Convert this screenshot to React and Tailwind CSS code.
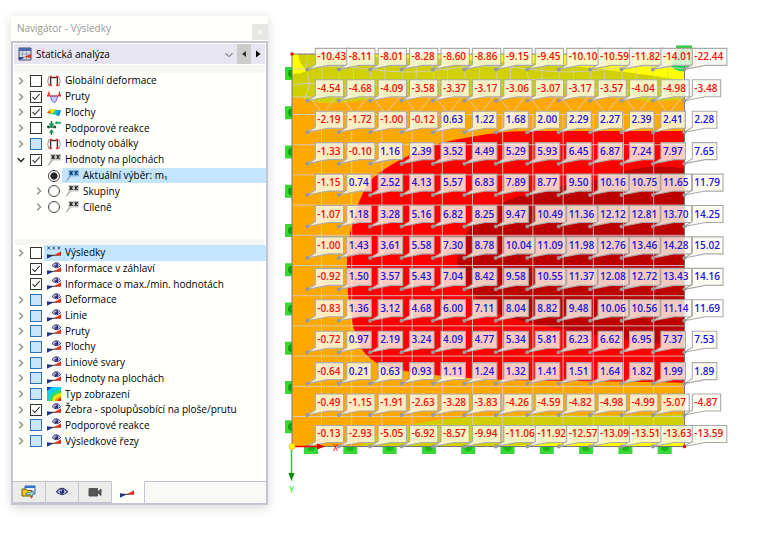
import React, { useState } from "react";
import clsx from "clsx";

const resultItems = [
  { label: "Globální deformace", icon: "frame", state: "off" },
  { label: "Pruty", icon: "member", state: "on" },
  { label: "Plochy", icon: "surface", state: "on" },
  { label: "Podporové reakce", icon: "support", state: "off" },
  { label: "Hodnoty obálky", icon: "frame", state: "mixed" },
  { label: "Hodnoty na plochách", icon: "values", state: "on", open: true },
];

const choices = [
  { label: "Aktuální výběr: m₁", leaf: true },
  { label: "Skupiny" },
  { label: "Cíleně" },
];

const displayItems = [
  { label: "Výsledky", icon: "numbers", state: "off", selected: true },
  { label: "Informace v záhlaví", icon: "eye", state: "on", leaf: true },
  { label: "Informace o max./min. hodnotách", icon: "eye", state: "on", leaf: true },
  { label: "Deformace", icon: "eye", state: "mixed" },
  { label: "Linie", icon: "eye", state: "mixed" },
  { label: "Pruty", icon: "eye", state: "mixed" },
  { label: "Plochy", icon: "eye", state: "mixed" },
  { label: "Liniové svary", icon: "eye", state: "mixed" },
  { label: "Hodnoty na plochách", icon: "eye", state: "mixed" },
  { label: "Typ zobrazení", icon: "contour", state: "mixed" },
  { label: "Žebra - spolupůsobící na ploše/prutu", icon: "eye", state: "on" },
  { label: "Podporové reakce", icon: "eye", state: "mixed" },
  { label: "Výsledkové řezy", icon: "eye", state: "mixed" },
];

const values = [
  "-10.43 -8.11 -8.01 -8.28 -8.60 -8.86 -9.15 -9.45 -10.10 -10.59 -11.82 -14.01 -22.44",
  "-4.54 -4.68 -4.09 -3.58 -3.37 -3.17 -3.06 -3.07 -3.17 -3.57 -4.04 -4.98 -3.48",
  "-2.19 -1.72 -1.00 -0.12 0.63 1.22 1.68 2.00 2.29 2.27 2.39 2.41 2.28",
  "-1.33 -0.10 1.16 2.39 3.52 4.49 5.29 5.93 6.45 6.87 7.24 7.97 7.65",
  "-1.15 0.74 2.52 4.13 5.57 6.83 7.89 8.77 9.50 10.16 10.75 11.65 11.79",
  "-1.07 1.18 3.28 5.16 6.82 8.25 9.47 10.49 11.36 12.12 12.81 13.70 14.25",
  "-1.00 1.43 3.61 5.58 7.30 8.78 10.04 11.09 11.98 12.76 13.46 14.28 15.02",
  "-0.92 1.50 3.57 5.43 7.04 8.42 9.58 10.55 11.37 12.08 12.72 13.43 14.16",
  "-0.83 1.36 3.12 4.68 6.00 7.11 8.04 8.82 9.48 10.06 10.56 11.14 11.69",
  "-0.72 0.97 2.19 3.24 4.09 4.77 5.34 5.81 6.23 6.62 6.95 7.37 7.53",
  "-0.64 0.21 0.63 0.93 1.11 1.24 1.32 1.41 1.51 1.64 1.82 1.99 1.89",
  "-0.49 -1.15 -1.91 -2.63 -3.28 -3.83 -4.26 -4.59 -4.82 -4.98 -4.99 -5.07 -4.87",
  "-0.13 -2.93 -5.05 -6.92 -8.57 -9.94 -11.06 -11.92 -12.57 -13.09 -13.51 -13.63 -13.59",
].map((row) => row.split(" "));

function Chevron({ open }) {
  return (
    <svg viewBox="0 0 8 8" className="h-2 w-2 shrink-0" fill="none">
      {open ? (
        <path d="M0.7 2.2 4 5.6 7.3 2.2" stroke="#222" strokeWidth="1.4" />
      ) : (
        <path d="M2.2 0.8 5.6 4 2.2 7.2" stroke="#8b8b8b" strokeWidth="1.3" />
      )}
    </svg>
  );
}

function Wedges() {
  return (
    <>
      <path d="M0 8.3 7 9.3 0 12.8Z" fill="#1c36b8" />
      <path d="M0 9.8 14 8.8" stroke="#333" strokeWidth="1.1" />
      <path d="M7 9.3 14 5.2v4.5Z" fill="#e5301c" />
    </>
  );
}

function Eye({ x = 0, y = 0, s = 1 }) {
  return (
    <g transform={`translate(${x} ${y}) scale(${s})`}>
      <path d="M0 4Q5-2.5 10 4 5 9 0 4Z" fill="#dcdcf6" stroke="#33336e" strokeWidth="1.1" />
      <circle cx="5" cy="3.7" r="2.2" fill="#26267a" />
      <circle cx="4.3" cy="3" r="0.7" fill="#fff" />
    </g>
  );
}

function Icon({ name, selected }) {
  return (
    <svg viewBox="0 0 14 14" className="h-3.5 w-3.5 shrink-0" fill="none">
      {name === "frame" && (
        <>
          <path d="M3.6 12V3.5h6.8V12" stroke="#333" strokeWidth="1.4" />
          <path d="M2 2.5Q-0.6 7 2 12M12 2.5q2.6 4.5 0 9.5" stroke="#a08f8f" strokeWidth="1" />
          <path d="M2.6 2.8h2.4M9 2.8h2.4M2.4 11.3h2.4M9.2 11.3h2.4" stroke="#e03a28" strokeWidth="1.9" />
        </>
      )}
      {name === "member" && (
        <>
          <path d="M0 6 2 0.5 3.3 6ZM10.8 6 12.5 0.5 14 6Z" fill="#ef3b28" />
          <path d="M3.3 6h7.4Q9.5 12.5 7 12.5 4.5 12 3.3 6Z" fill="#c8c8ff" stroke="#6868e8" />
          <path d="M0 6h14" stroke="#d33" strokeWidth="1" />
        </>
      )}
      {name === "surface" && (
        <>
          <path d="M0 8 3.5 4 14 5.5 12 11 7 9.5Z" fill="#23d45f" />
          <path d="M1 7 4 4l5 .8L5 8.8Z" fill="#f4e300" />
          <path d="M0 8 2.5 5.2 4 8.6Z" fill="#f14b12" />
          <path d="M9 4.8 14 5.5 12 11 9 10Z" fill="#1687ee" />
          <path d="M7.5 6 11 5.2 9.5 9.8 7 9Z" fill="#17ccb7" />
        </>
      )}
      {name === "support" && (
        <>
          <path d="M4.5 0v4M1.2 6h7M4.5 9v5" stroke="#176f45" strokeWidth="1.6" />
          <path d="M1.5 2.6h6L4.5 6.4ZM7.6 1.8 10.2 0v3.6ZM1.8 11.6l2.7-3.2 2.7 3.2Z" fill="#199355" />
          <path d="M10 1.8h4" stroke="#22b66b" strokeWidth="2" />
          <circle cx="1.4" cy="6" r="1.4" fill="#155c3a" />
          <circle cx="7.8" cy="6" r="1.4" fill="#155c3a" />
        </>
      )}
      {name === "values" && (
        <>
          <path d="M3.5 1H14v6.5H6L1 12.5 3.5 7Z" fill={selected ? "#7fb9e6" : "#cacaca"} />
          <path d="M1 12.5 5 7.5" stroke="#999" />
          <path
            d="m4.7 2.2 2.8 3.6m0-3.6L4.7 5.8m5.1-3.6 2.8 3.6m0-3.6L9.8 5.8"
            stroke={selected ? "#0b3c70" : "#222"}
            strokeWidth="1.3"
          />
        </>
      )}
      {name === "numbers" && (
        <>
          <path
            d="m.5.5 2.4 3m0-3-2.4 3M5.5.5l2.4 3m0-3-2.4 3m5.1-3 2.4 3m0-3-2.4 3"
            stroke="#173f68"
            strokeWidth="0.9"
          />
          <Wedges />
        </>
      )}
      {name === "eye" && (
        <>
          <Wedges />
          <Eye x={5} y={0} s={0.88} />
        </>
      )}
      {name === "contour" && (
        <>
          <path d="M0 0h14v14H0Z" fill="#12cdf1" />
          <path d="M0 0h5L0 4Z" fill="#1637d8" />
          <path d="M2 14Q3 4 14 3v11Z" fill="#32dd5a" />
          <path d="M5 14Q6 7 14 6v8Z" fill="#ece712" />
          <path d="M8 14q0-4 6-5v5Z" fill="#ff9d12" />
          <path d="M10.5 14q0-2 3.5-3v3Z" fill="#ee2211" />
        </>
      )}
    </svg>
  );
}

function CheckBox({ state }) {
  const [checked, setChecked] = useState(state === "on");
  return (
    <span className="relative h-3 w-3 shrink-0">
      <input
        type="checkbox"
        checked={checked}
        onChange={(e) => setChecked(e.target.checked)}
        className={clsx(
          "block h-3 w-3 appearance-none border",
          state === "mixed" ? "border-[#2d72b4] bg-[#c9e4fb]" : "border-[#333333] bg-white"
        )}
      />
      {checked && (
        <svg viewBox="0 0 12 12" className="pointer-events-none absolute inset-0" fill="none">
          <path d="M2.5 6 4.8 8.5 9.7 3" stroke="#222" strokeWidth="1.1" />
        </svg>
      )}
    </span>
  );
}

function TreeRow({ item }) {
  return (
    <li className="flex items-center gap-[5px] pl-1">
      <span className="w-2 shrink-0">{!item.leaf && <Chevron open={item.open} />}</span>
      <label className="flex h-full min-w-0 flex-1 items-center gap-0.5">
        <CheckBox state={item.state} />
        <span
          className={clsx(
            "flex h-full min-w-0 flex-1 items-center gap-1 whitespace-nowrap pl-[3px]",
            item.selected && "bg-[#c5e5ff]"
          )}
        >
          <Icon name={item.icon} />
          {item.label}
        </span>
      </label>
    </li>
  );
}

function ChoiceRow({ item, active, onPick }) {
  return (
    <li className="flex items-center gap-[5px] pl-[22px]">
      <span className="w-2 shrink-0">{!item.leaf && <Chevron />}</span>
      <label className="flex h-full flex-1 items-center gap-0.5">
        <input
          type="radio"
          name="choice"
          checked={active}
          onChange={onPick}
          className="h-3 w-3 shrink-0 appearance-none rounded-full border border-[#444444] bg-white checked:bg-[radial-gradient(#222_0_3px,#fff_4px)]"
        />
        <span
          className={clsx(
            "flex h-full flex-1 items-center gap-1 whitespace-nowrap pl-[3px]",
            active && "bg-[#c5e5ff]"
          )}
        >
          <Icon name="values" selected={active} />
          {item.label}
        </span>
      </label>
    </li>
  );
}

function Navigator() {
  const [choice, setChoice] = useState(0);
  const [tab, setTab] = useState(3);

  return (
    <aside className="ml-[11px] mt-[15px] w-[257px] shrink-0 border-t border-[#f5f5f0] bg-[#fffffb] shadow-[0_3px_10px_rgba(0,0,0,0.15)]">
      <header className="flex h-[25px] items-center justify-between pl-1.5">
        <h1 className="text-[#999999]">Navigátor - Výsledky</h1>
        <button
          type="button"
          aria-label="Zavřít"
          className="mt-1.5 h-4 w-4 bg-[#e6e6e4] text-center text-[8px] leading-4 text-white"
        >
          ✕
        </button>
      </header>

      <div className="border-2 border-[#c4c4d2]">
        <div className="m-px flex h-5 items-center bg-[#e8e5f2]">
          <svg viewBox="0 0 14 14" className="ml-1 h-3.5 w-3.5 shrink-0">
            <path d="M1 1h12v12H1Z" fill="#d7dcea" stroke="#44506a" />
            <path d="M1 1h12v3H1Z" fill="#4c68a8" />
            <path d="M4.5 4v8M8.5 4v8M1 7h12" stroke="#8a96b0" strokeWidth=".8" />
            <path d="m6 10 7-3v4Z" fill="#e03318" />
            <path d="m1 10 6 .6L1 13Z" fill="#1c3393" />
          </svg>
          <div className="relative flex-1">
            <select aria-label="Typ analýzy" className="w-full appearance-none pl-1 text-black">
              <option>Statická analýza</option>
            </select>
            <svg viewBox="0 0 8 8" className="pointer-events-none absolute right-1 top-1 h-2 w-2" fill="none">
              <path d="M0.5 2 4 5.7 7.5 2" stroke="#555" />
            </svg>
          </div>
          <button type="button" aria-label="Předchozí" className="flex h-full w-3.5 items-center justify-center bg-[#cbcbcb]">
            <svg viewBox="0 0 6 8" className="h-2 w-1.5">
              <path d="M5 1v6L1 4Z" fill="#333" />
            </svg>
          </button>
          <button type="button" aria-label="Další" className="flex h-full w-3.5 items-center justify-center">
            <svg viewBox="0 0 6 8" className="h-2 w-1.5">
              <path d="M1 0.5v7L5.5 4Z" fill="#000" />
            </svg>
          </button>
        </div>
        <div className="mx-px h-2 bg-[#f6f6f3]" />

        <ul className="mb-6 grid h-[142px] auto-rows-fr">
          {resultItems.map((item) => (
            <TreeRow key={item.label} item={item} />
          ))}
          {choices.map((item, i) => (
            <ChoiceRow key={item.label} item={item} active={choice === i} onPick={() => setChoice(i)} />
          ))}
        </ul>
        <div className="mx-px h-1.5 bg-[#f6f6f3]" />
        <ul className="mb-8 grid h-[204px] auto-rows-fr">
          {displayItems.map((item) => (
            <TreeRow key={item.label} item={item} />
          ))}
        </ul>

        <nav className="flex h-[22px] bg-[#f8f8f5]">
          {["Data", "Zobrazit", "Pohledy", "Výsledky"].map((name, i) => (
            <button
              key={name}
              type="button"
              aria-label={name}
              onClick={() => setTab(i)}
              className={clsx(
                "flex w-[33px] items-center justify-center border-r border-[#c4c4d2]",
                tab === i ? "bg-[#fffffb]" : "border-y bg-[#ececea]"
              )}
            >
              <svg viewBox="0 0 16 14" className="h-3.5 w-4" fill="none">
                {i === 0 && (
                  <>
                    <path d="M4 1h10v8H4Z" fill="#e6f0ff" stroke="#2c63b5" />
                    <path d="M4 1h10v2H4Z" fill="#3773cc" />
                    <path d="M1 4h4l1 1.5h5V11H1Z" fill="#f5c518" stroke="#75600c" />
                    <path d="m5 8 8-1.500-2 5-1.500-2L5 10Z" fill="#9fe2f5" stroke="#2f6f92" strokeWidth=".7" />
                    <path d="m9 11 3 .3-1.500 2.500Z" fill="#d33719" />
                  </>
                )}
                {i === 1 && <Eye x={2.5} y={2.5} s={1.1} />}
                {i === 2 && <path d="M2 3.500h8.500v7.500H2ZM11 6.500l3-2.500v6.500l-3-2.500Z" fill="#555" stroke="#555" />}
                {i === 3 && <Wedges />}
              </svg>
            </button>
          ))}
          <div className="flex-1 border-t border-[#c4c4d2]" />
        </nav>
      </div>
    </aside>
  );
}

// Plate geometry in drawing units
const LEFT = 292;
const TOP = 54;
const RIGHT = 684.5;
const BOTTOM = 446.5;
const STEP = 31.42;
const CELL = 30.2;

const points = values.flatMap((row, r) =>
  row.map((text, c) => {
    const negative = text.startsWith("-");
    const digits = text.replace(/[-.]/g, "").length;
    return {
      text,
      negative,
      x: 307.3 + c * STEP,
      y: 69.4 + r * STEP,
      w: 24.5 + (digits - 3) * 6.2 + (negative ? 3.8 : 0),
    };
  })
);

const steps = (n) => Array.from({ length: n }, (_, i) => i);

function ResultPlot() {
  return (
    <svg viewBox="268 0 492 538" className="h-auto w-full" role="img" aria-label="m₁">
      {/* supports */}
      {steps(10).map((i) => (
        <g key={i}>
          <rect x="285" y={67 + i * 39.25} width="7" height="13" fill="#38d738" />
          <path d={`M292 ${69.5 + i * 39.25}a4 4 0 0 0 0 8Z`} fill="#0da50d" />
          <rect x={304 + i * 39.3} y="447" width="14" height="7" fill="#38d738" />
          <path d={`M${307 + i * 39.3} 447a4 4 0 0 0 8 0Z`} fill="#1cb51c" />
        </g>
      ))}
      <rect x="676" y="45.5" width="16" height="22" fill="#2ec93c" />

      {/* contour bands */}
      <rect x={LEFT} y={TOP} width={RIGHT - LEFT} height={BOTTOM - TOP} fill="#ffa800" />
      <path d="M292 54H684.5V98C672 102 655 102 640 100C600 93 540 95 500 95C450 94 420 95 400 96C370 99 350 103 325 103C310 102 302 97 292 97Z" fill="#d0d000" />
      <path d="M292 54H298C299 62 302 67 308 70C303 73 298 74 292 74Z" fill="#ffff00" />
      <path d="M320 54H684.5V81C660 76 625 72 590 68C540 62 450 59 400 58Z" fill="#ffff00" />
      <path d="M684.5 131H560C535 131 515 131 500 132.5C480 135 460 138 440 143.5C420 149 390 163 373 178C361 189 347 230 347 262C346 292 351 328 361 348C367 357 375 363 384 366C405 373 450 377 493 379.5C550 382 630 381 684.5 383Z" fill="#ff0000" />
      <path d="M684.5 168.5Q650 163 622 172Q605 179 575 184C545 188 515 196 497 205C475 217 457 240 457 260C458 278 475 302 497 313C530 326 560 328 590 334C620 341 650 340 684.5 349Z" fill="#bc0000" />
      <path d="M359 446.5C375 433 410 423 440 420C470 416 520 415 560 415Q630 416 684.5 414V446.5Z" fill="#d0d000" />
      <path d="M500 446.5Q560 442 684.5 438V446.5Z" fill="#ffff00" />
      <path d="M671 66Q676 72 684.5 71V54H676Z" fill="#12dc4e" />

      {/* mesh */}
      <g stroke="#d3cccc" strokeOpacity=".85" fill="none">
        {steps(12).map((i) => (
          <path key={`v${i}`} d={`M${321.5 + i * CELL} 114.5V446`} />
        ))}
        {steps(11).map((i) => (
          <path key={`h${i}`} d={`M292 ${114.5 + i * CELL}H684`} />
        ))}
        {steps(12).map((i) => (
          <path
            key={`t${i}`}
            d={`M${308 + i * STEP} 54q-3 12 0 22t-3 22M${322 + i * STEP} 57v20l-4 21M${310 + i * STEP} 97l13 17 14-18`}
          />
        ))}
        <path d="M292 69h16q20-6 60 0t80 0 80 0 80 0 76 0M292 85q15-3 40 0t60-2 60 2 60-2 60 2 112 0M292 97h392" />
      </g>
      <path d="M292 54H684.5V446.5H292Z" fill="none" stroke="#777" />
      <circle cx="292" cy="54" r="1.7" fill="#e00" />

      {/* value flags */}
      {points.map(({ x, y, w }) => (
        <g key={`${x}-${y}`}>
          <path
            d={`M${x + 8} ${y - 21}h${w}v17h${-(w - 13)}L${x} ${y}L${x + 8} ${y - 5}Z`}
            fill="#fffdf0"
            fillOpacity=".8"
            stroke="#aaaaaa"
            strokeWidth="1.1"
          />
          <circle cx={x} cy={y} r="2" fill="#999" />
        </g>
      ))}
      <g className="font-semibold" fontSize="10">
        {points.map(({ x, y, text, negative }) => (
          <text key={`${x}-${y}`} x={x + 10} y={y - 9} fill={negative ? "#f01010" : "#1616dc"}>
            {text}
          </text>
        ))}
      </g>

      {/* axes */}
      <path d="M292 446.5H318" stroke="#f00" strokeWidth="1.5" />
      <path d="M317 443.5 325 446.5 317 449.5Z" fill="#d00" />
      <path d="M291.5 447V474" stroke="#00e800" strokeWidth="1.5" />
      <path d="M288.5 473h6l-3 8Z" fill="#008c00" />
      <circle cx="292" cy="446.5" r="3" fill="#ff0" stroke="#d8c000" strokeWidth=".6" />
      <circle cx="684.5" cy="446.5" r="1.5" fill="#e00" />
      <text x="333" y="451" fontSize="9" fill="#f00">X</text>
      <text x="289" y="493" fontSize="9" fill="#00e800">Y</text>
    </svg>
  );
}

export default function App() {
  return (
    <main className="flex min-h-screen items-start bg-white font-['Open_Sans','Noto_Sans',sans-serif] text-[10px] font-medium text-black">
      <Navigator />
      <section className="min-w-0 flex-1">
        <ResultPlot />
      </section>
    </main>
  );
}
